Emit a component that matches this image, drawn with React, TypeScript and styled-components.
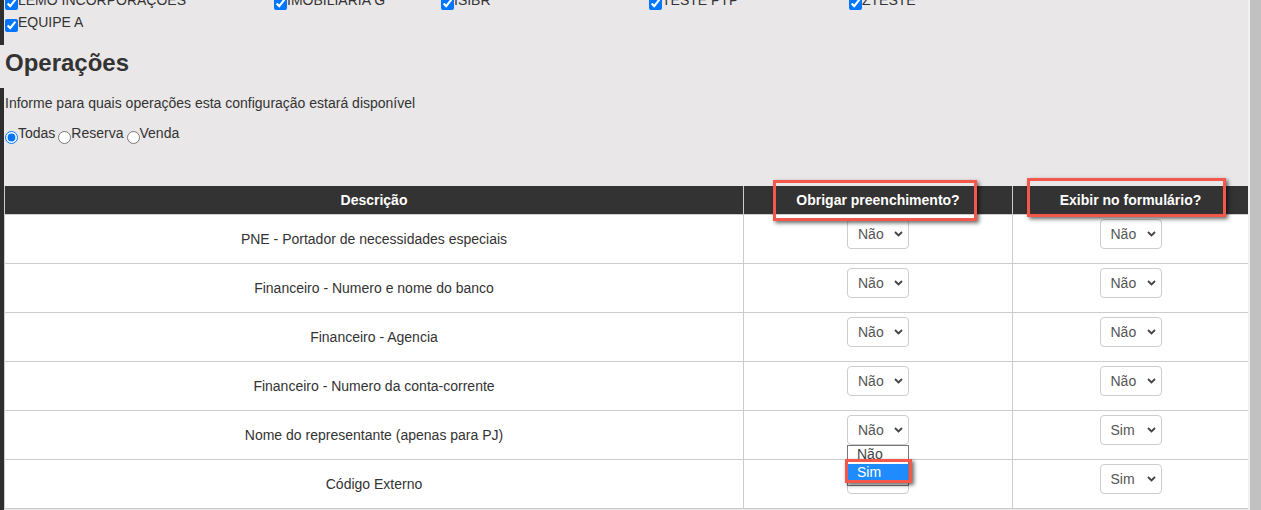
import React from 'react';
import styled, { createGlobalStyle } from 'styled-components';

const GlobalStyle = createGlobalStyle`
  html, body { margin: 0; padding: 0; height: 100%; overflow: hidden; background: #e9e7e8; }
  body { font-family: "Liberation Sans", Arial, sans-serif; font-size: 14px; color: #333; }
  #root { height: 100%; }
  * { box-sizing: border-box; }
`;

const Page = styled.div`
  display: flex;
  width: 1261px;
  height: 510px;
  overflow: hidden;
`;

const Strip = styled.div`
  width: 4px;
  flex: none;
  background: linear-gradient(#2e2e2e 0 45px, transparent 45px 88px, #2e2e2e 88px);
`;

const Main = styled.main`
  flex: 1;
  min-width: 0;
  padding-left: 1px;
  overflow: hidden;
`;

const Scrollbar = styled.div`
  width: 13px;
  flex: none;
  background: #f1f1f1;
  display: flex;
  justify-content: flex-end;
`;

const Thumb = styled.div`
  width: 11px;
  background: #c1c1c1;
`;

const Inner = styled.div`
  margin-top: -8px;
`;

const CheckGrid = styled.div`
  display: grid;
  grid-template-columns: 269px 167px 208px 200px auto;
  row-gap: 4px;
`;

const Choice = styled.label`
  display: flex;
  align-items: flex-start;
  line-height: 16px;
  white-space: nowrap;
  color: #333;
`;

const Check = styled.input`
  width: 13px;
  height: 13px;
  margin: ${(p) => (p.type === 'radio' ? '6px' : '5px')} 0 0 0;
  accent-color: #0075ff;
  flex: none;
`;

const Title = styled.h2`
  margin: 17px 0 0;
  font-size: 24px;
  line-height: 28px;
  font-weight: bold;
  color: #333;
`;

const Hint = styled.p`
  margin: 18px 0 0;
  line-height: 16px;
`;

const RadioRow = styled.div`
  display: flex;
  gap: 3px;
  margin-top: 14px;
`;

const TableWrap = styled.div`
  margin-top: 42px;
  margin-left: -1px;
`;

const Table = styled.table`
  width: 1244px;
  border-collapse: collapse;
  table-layout: fixed;
  background: #fff;
`;

const Th = styled.th`
  position: relative;
  height: 28px;
  padding: 0;
  background: #333;
  color: #fff;
  font-weight: bold;
  font-size: 14px;
  text-align: center;
  border-left: 1px solid #ccc;
  border-right: 1px solid #ccc;
`;

const Td = styled.td<{ $top?: boolean }>`
  height: 49px;
  padding: ${(p) => (p.$top ? '4px 0 0' : '0')};
  border: 1px solid #ccc;
  text-align: center;
  vertical-align: ${(p) => (p.$top ? 'top' : 'middle')};
  color: #333;
`;

const SelectWrap = styled.div`
  position: relative;
  display: inline-block;
  width: 62px;
  height: 30px;
`;

const Select = styled.select`
  appearance: none;
  -webkit-appearance: none;
  width: 62px;
  height: 30px;
  margin: 0;
  padding: 0 0 0 10px;
  border: 1px solid #cdcdcd;
  border-radius: 4px;
  background: #fff;
  color: #555;
  font-family: "Liberation Sans", Arial, sans-serif;
  font-size: 14px;
  display: block;
`;

const Chevron = styled.svg`
  position: absolute;
  right: 6px;
  top: 50%;
  transform: translateY(-50%);
  pointer-events: none;
`;

const DropList = styled.div`
  position: absolute;
  top: 100%;
  left: 0;
  width: 62px;
  z-index: 5;
  background: #fff;
  border: 1px solid #767676;
  padding-bottom: 3px;
  text-align: left;
`;

const DropOption = styled.div<{ $active?: boolean }>`
  height: 18px;
  line-height: 17px;
  padding-left: 9px;
  font-size: 14px;
  color: ${(p) => (p.$active ? '#fff' : '#444')};
  background: ${(p) => (p.$active ? '#1e8cff' : '#fff')};
`;

const Annotation = styled.span<{ $l: number; $t: number; $w: number; $h: number }>`
  position: absolute;
  left: ${(p) => p.$l}px;
  top: ${(p) => p.$t}px;
  width: ${(p) => p.$w}px;
  height: ${(p) => p.$h}px;
  border: 3px solid #f4584b;
  box-shadow: 2px 2px 4px rgba(0, 0, 0, 0.6);
  pointer-events: none;
  z-index: 6;
`;

const companies = ['LEMO INCORPORAÇÕES', 'IMOBILIARIA G', 'ISIBR', 'TESTE PTP', 'ZTESTE', 'EQUIPE A'];

type Row = { label: string; req: string; show: string; open?: boolean };
const rows: Row[] = [
  { label: 'PNE - Portador de necessidades especiais', req: 'Não', show: 'Não' },
  { label: 'Financeiro - Numero e nome do banco', req: 'Não', show: 'Não' },
  { label: 'Financeiro - Agencia', req: 'Não', show: 'Não' },
  { label: 'Financeiro - Numero da conta-corrente', req: 'Não', show: 'Não' },
  { label: 'Nome do representante (apenas para PJ)', req: 'Não', show: 'Sim', open: true },
  { label: 'Código Externo', req: 'Não', show: 'Sim' },
];

function YesNo({ value, open }: { value: string; open?: boolean }) {
  return (
    <SelectWrap>
      <Select defaultValue={value}>
        <option value="Não">Não</option>
        <option value="Sim">Sim</option>
      </Select>
      <Chevron width="9" height="6" viewBox="0 0 9 6">
        <path d="M1 1 L4.5 4.5 L8 1" fill="none" stroke="#444" strokeWidth="1.8" />
      </Chevron>
      {open && (
        <DropList>
          <DropOption>Não</DropOption>
          <DropOption $active>Sim</DropOption>
          <Annotation $l={-3} $t={13} $w={67} $h={24} />
        </DropList>
      )}
    </SelectWrap>
  );
}

export default function App() {
  return (
    <>
      <GlobalStyle />
      <Page>
        <Strip />
        <Main>
          <Inner>
            <CheckGrid>
              {companies.map((c) => (
                <Choice key={c}>
                  <Check type="checkbox" defaultChecked />
                  <span>{c}</span>
                </Choice>
              ))}
            </CheckGrid>
            <Title>Operações</Title>
            <Hint>Informe para quais operações esta configuração estará disponível</Hint>
            <RadioRow>
              {['Todas', 'Reserva', 'Venda'].map((o, i) => (
                <Choice key={o}>
                  <Check type="radio" name="op" defaultChecked={i === 0} />
                  <span>{o}</span>
                </Choice>
              ))}
            </RadioRow>
            <TableWrap>
              <Table>
                <colgroup>
                  <col style={{ width: 739 }} />
                  <col style={{ width: 269 }} />
                  <col style={{ width: 236 }} />
                </colgroup>
                <thead>
                  <tr>
                    <Th>Descrição</Th>
                    <Th>
                      Obrigar preenchimento?
                      <Annotation $l={29} $t={-6} $w={204} $h={41} />
                    </Th>
                    <Th>
                      Exibir no formulário?
                      <Annotation $l={14} $t={-8} $w={199} $h={39} />
                    </Th>
                  </tr>
                </thead>
                <tbody>
                  {rows.map((r) => (
                    <tr key={r.label}>
                      <Td>{r.label}</Td>
                      <Td $top>
                        <YesNo value={r.req} open={r.open} />
                      </Td>
                      <Td $top>
                        <YesNo value={r.show} />
                      </Td>
                    </tr>
                  ))}
                </tbody>
              </Table>
            </TableWrap>
          </Inner>
        </Main>
        <Scrollbar>
          <Thumb />
        </Scrollbar>
      </Page>
    </>
  );
}
